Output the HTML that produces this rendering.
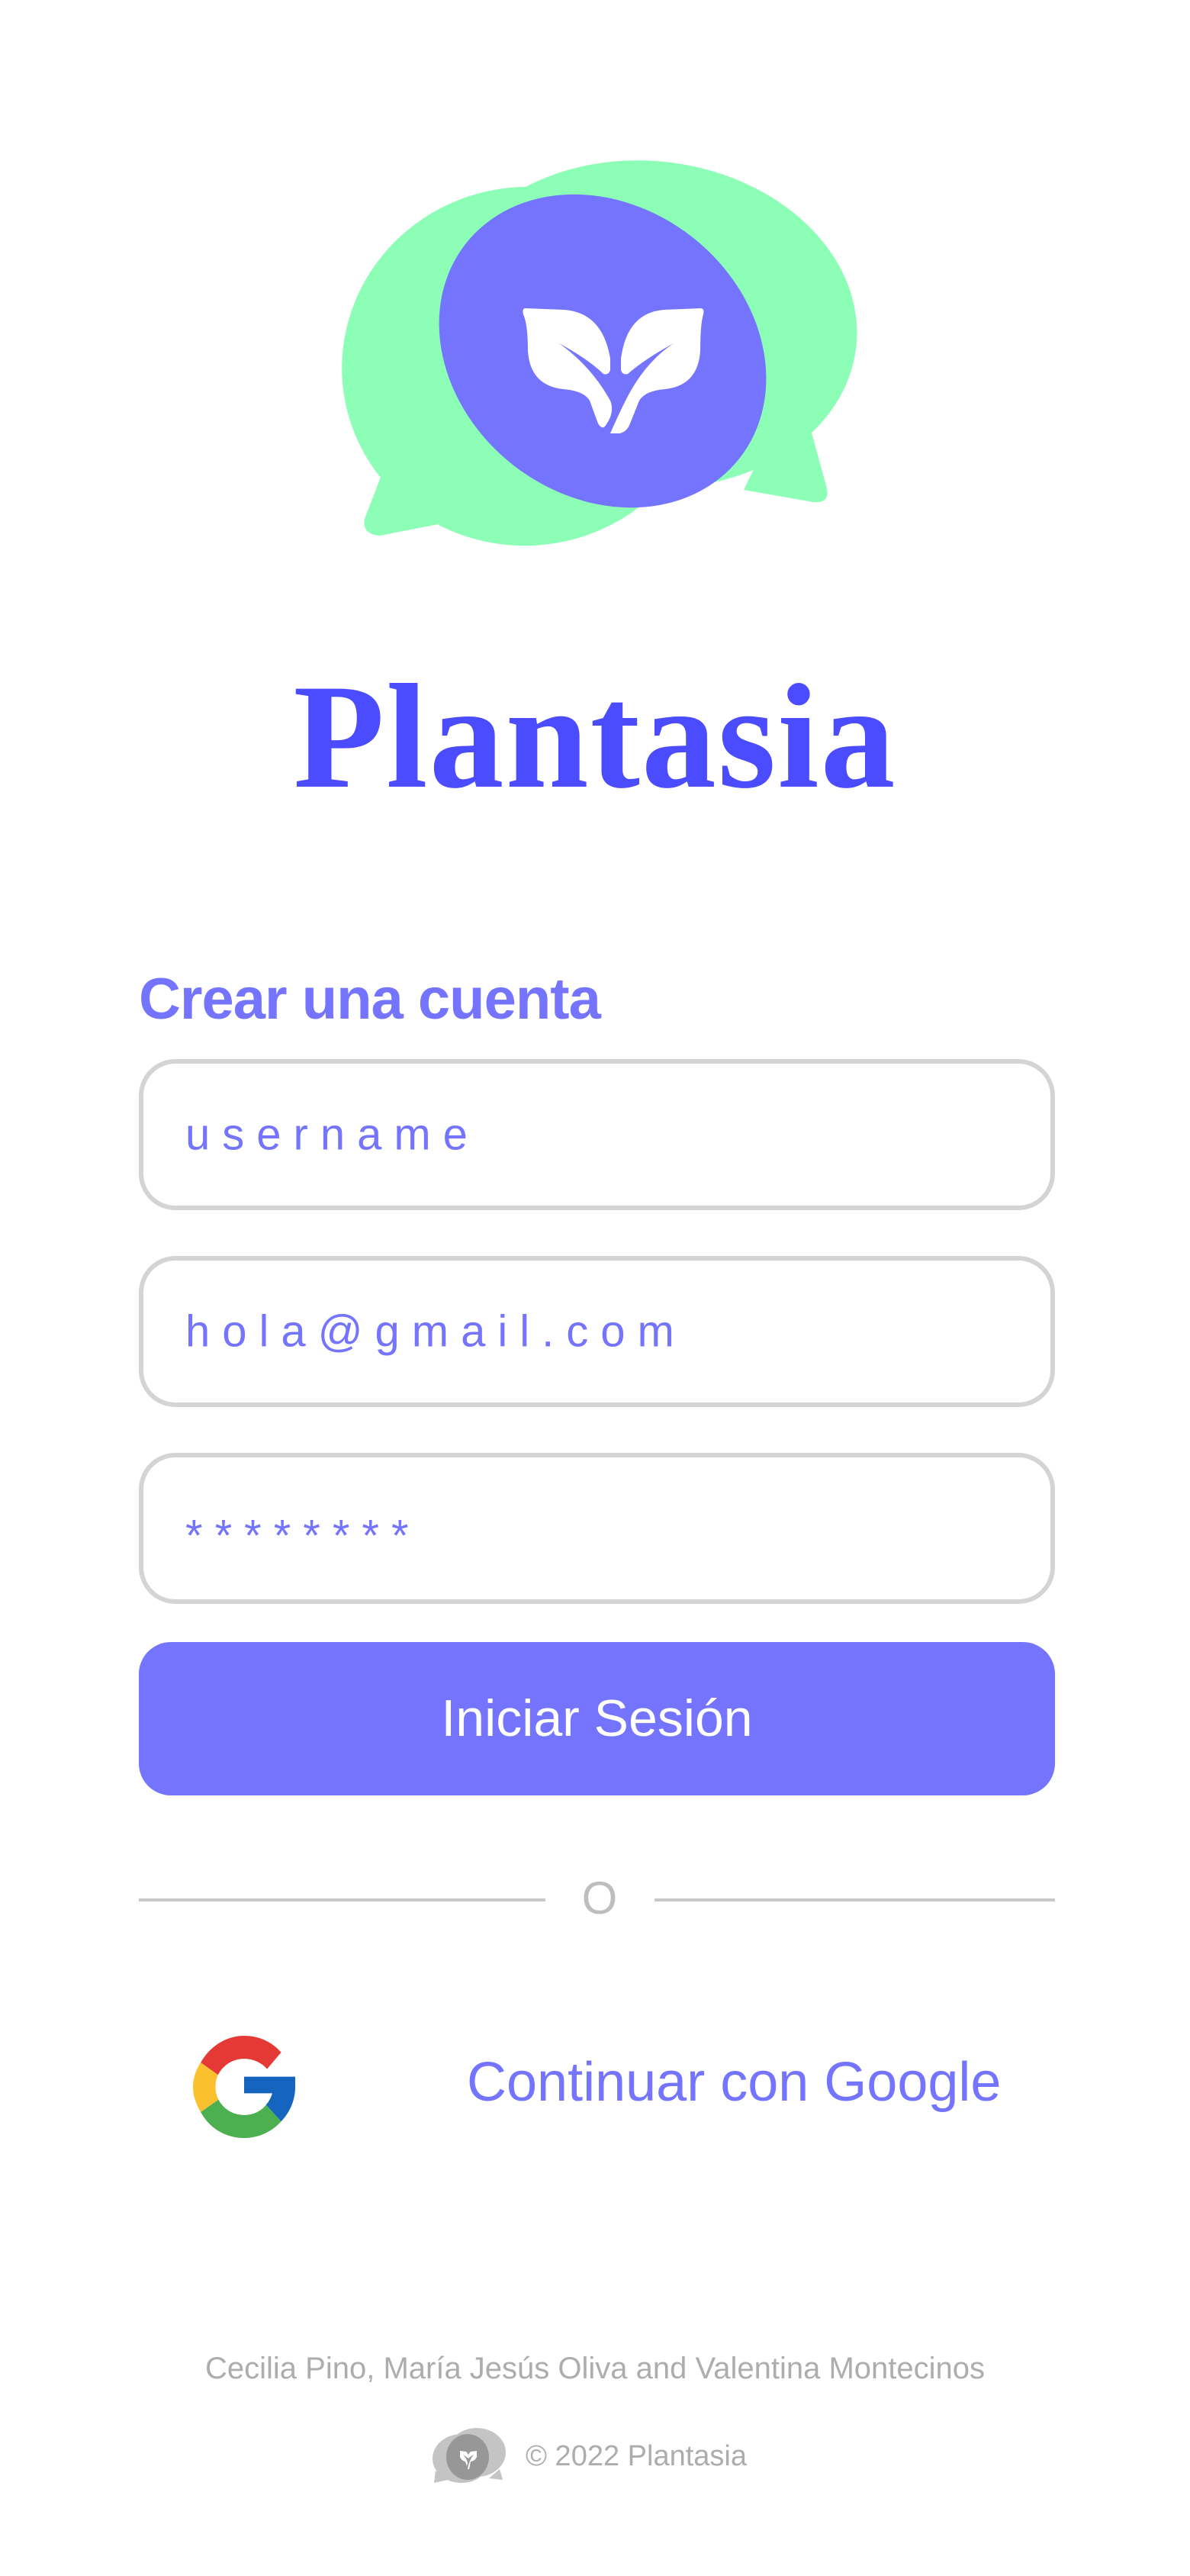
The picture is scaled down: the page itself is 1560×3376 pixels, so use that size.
<!DOCTYPE html>
<html><head><meta charset="utf-8"><style>
html,body{margin:0;padding:0;background:#fff;}
body{width:1560px;height:3376px;position:relative;overflow:hidden;font-family:"Liberation Sans",Arial,sans-serif;}
.abs{position:absolute;}
.inp{position:absolute;left:182px;width:1189px;height:186px;border:6px solid #d4d4d4;border-radius:48px;}
.inp span{position:absolute;left:55px;top:50%;transform:translateY(-50%);font-size:58px;color:#7474ff;letter-spacing:16px;}
</style></head><body>
<svg class="abs" style="left:0;top:0" width="1560" height="800" viewBox="0 0 1560 800">
  <g fill="#8cfeb6">
    <ellipse cx="690" cy="480" rx="242" ry="235" transform="rotate(-10 690 480)"/>
    <ellipse cx="850" cy="425" rx="274" ry="214" transform="rotate(6 850 425)"/>
    <path d="M505 610 L478 680 Q474 700 498 702 L600 682 L640 640 Z"/>
    <path d="M1062 560 L1084 640 Q1088 660 1066 658 L975 642 L1000 590 Z"/>
  </g>
  <ellipse cx="790" cy="460" rx="228" ry="190" transform="rotate(38 790 460)" fill="#7474ff"/>
  <g fill="#fff">
    <path d="M689 404 L740 406 Q790 410 800 470 L800 485 Q798 492 791 490 Q770 470 733 450 Q775 480 800 525 Q806 540 795 556 Q790 565 784 555 L773 525 Q765 512 738 510 Q695 505 692 460 Q692 425 686 412 Q684 404 689 404 Z"/>
    <path d="M918 404 L870 406 Q822 410 814 470 L814 485 Q816 492 823 490 Q846 470 883 450 Q845 475 820 525 Q810 545 800 568 L812 568 Q822 566 826 555 L838 525 Q846 512 872 510 Q915 505 918 460 Q918 425 922 412 Q924 404 918 404 Z"/>
  </g>
</svg>
<div class="abs" style="left:0;width:1560px;top:868px;text-align:center;font-family:'Liberation Serif',serif;font-weight:bold;font-size:196px;color:#4b4bff;line-height:1.0;letter-spacing:2px;">Plantasia</div>
<div class="abs" style="left:182px;top:1266px;font-size:76px;font-weight:bold;color:#7474ff;letter-spacing:-1px;">Crear una cuenta</div>
<div class="inp" style="top:1388px"><span>username</span></div>
<div class="inp" style="top:1646px"><span>hola@gmail.com</span></div>
<div class="inp" style="top:1904px"><span style="margin-top:10px">********</span></div>
<div class="abs" style="left:182px;top:2152px;width:1201px;height:201px;background:#7474ff;border-radius:42px;color:#fff;font-size:68px;text-align:center;line-height:201px;">Iniciar Sesión</div>
<div class="abs" style="left:182px;top:2488px;width:533px;height:4px;background:#c8c8c8"></div>
<div class="abs" style="left:858px;top:2488px;width:525px;height:4px;background:#c8c8c8"></div>
<div class="abs" style="left:740px;width:92px;top:2453px;text-align:center;font-size:60px;color:#bdbdbd;line-height:70px;">O</div>
<svg class="abs" style="left:253px;top:2668px" width="134" height="134" viewBox="4 4 40 40">
  <path fill="#e53935" d="M24 4 C30 4 35 6.5 38.5 10.5 L33 17 C30.8 14.5 27.5 13 24 13 C19.5 13 15.8 15.5 13.8 19.3 L7 14.5 C10.5 8.3 16.8 4 24 4Z"/>
  <path fill="#fbc02d" d="M7 14.5 L13.8 19.3 C13 20.8 12.8 22.4 12.8 24 C12.8 25.8 13.2 27.5 14 29 L7 33.8 C5.2 30.8 4 27.5 4 24 C4 20.5 5.2 17.3 7 14.5Z"/>
  <path fill="#4caf50" d="M14 29 C15.9 32.6 19.6 35 24 35 C27.6 35 30.6 33.5 32.6 31 L38.5 37.5 C35 41.4 29.8 44 24 44 C16.6 44 10.3 40 7 33.8Z"/>
  <path fill="#1565c0" d="M24 20 L44 20 L44 24 C44 29.5 41.8 34 38.5 37.5 L32.6 31 C33.8 29.6 34.6 28 35 26.5 L24 26.5Z"/>
</svg>
<div class="abs" style="left:612px;top:2684px;font-size:72px;color:#7474ff;line-height:90px;">Continuar con Google</div>
<div class="abs" style="left:0;width:1560px;top:3082px;text-align:center;font-size:40px;color:#adadad;">Cecilia Pino, María Jesús Oliva and Valentina Montecinos</div>
<svg class="abs" style="left:565px;top:3180px" width="100" height="76" viewBox="0 0 100 76">
  <ellipse cx="40" cy="42" rx="38" ry="32" fill="#c4c4c4"/>
  <ellipse cx="60" cy="34" rx="38" ry="32" fill="#c4c4c4"/>
  <path d="M6 58 L4 74 L22 70Z M90 56 L94 70 L76 68Z" fill="#c4c4c4"/>
  <ellipse cx="48" cy="40" rx="28" ry="30" fill="#979797"/>
  <path d="M38 32 L46 33 Q50 36 49 42 Q44 38 42 37 Q47 42 48 48 L47 52 L45 46 Q40 45 38 40Z M60 32 L52 33 Q48 36 49 42 Q52 39 56 37 Q50 44 48 56 L50 56 L52 46 Q58 45 60 40Z" fill="#fff"/>
</svg>
<div class="abs" style="left:689px;top:3198px;font-size:38px;color:#adadad;">© 2022 Plantasia</div>
</body></html>
